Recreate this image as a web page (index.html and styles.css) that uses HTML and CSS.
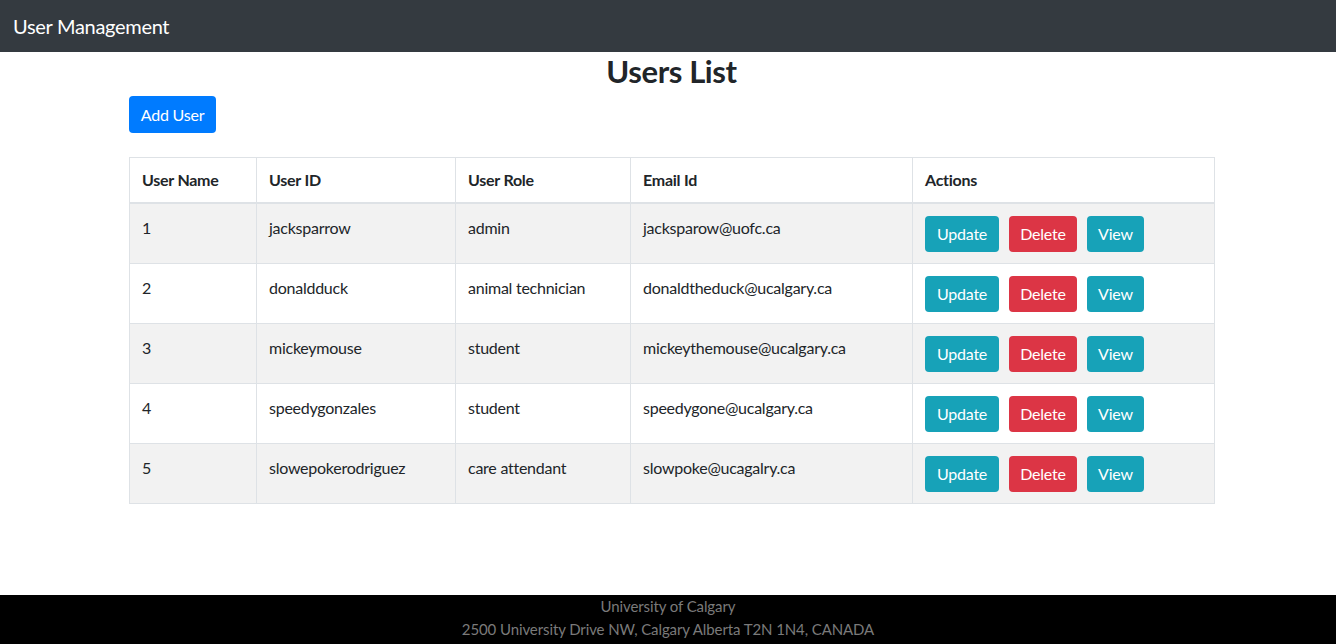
FILE: index.html
```html
<!DOCTYPE html>
<html lang="en">
<head>
<meta charset="utf-8">
<title>User Management</title>
<link rel="stylesheet" href="styles.css">
</head>
<body>
<nav class="navbar">
  <span class="brand">User Management</span>
</nav>
<main class="main">
  <h2 class="title">Users List</h2>
  <div class="toolbar">
    <button class="btn btn-primary">Add User</button>
  </div>
  <table class="users">
    <colgroup>
      <col class="c1"><col class="c2"><col class="c3"><col class="c4"><col class="c5">
    </colgroup>
    <thead>
      <tr><th>User Name</th><th>User ID</th><th>User Role</th><th>Email Id</th><th>Actions</th></tr>
    </thead>
    <tbody>
      <tr>
        <td>1</td><td>jacksparrow</td><td>admin</td><td>jacksparow@uofc.ca</td>
        <td><div class="actions"><button class="btn btn-info btn-update">Update</button><button class="btn btn-danger btn-delete">Delete</button><button class="btn btn-info btn-view">View</button></div></td>
      </tr>
      <tr>
        <td>2</td><td>donaldduck</td><td>animal technician</td><td>donaldtheduck@ucalgary.ca</td>
        <td><div class="actions"><button class="btn btn-info btn-update">Update</button><button class="btn btn-danger btn-delete">Delete</button><button class="btn btn-info btn-view">View</button></div></td>
      </tr>
      <tr>
        <td>3</td><td>mickeymouse</td><td>student</td><td>mickeythemouse@ucalgary.ca</td>
        <td><div class="actions"><button class="btn btn-info btn-update">Update</button><button class="btn btn-danger btn-delete">Delete</button><button class="btn btn-info btn-view">View</button></div></td>
      </tr>
      <tr>
        <td>4</td><td>speedygonzales</td><td>student</td><td>speedygone@ucalgary.ca</td>
        <td><div class="actions"><button class="btn btn-info btn-update">Update</button><button class="btn btn-danger btn-delete">Delete</button><button class="btn btn-info btn-view">View</button></div></td>
      </tr>
      <tr>
        <td>5</td><td>slowepokerodriguez</td><td>care attendant</td><td>slowpoke@ucagalry.ca</td>
        <td><div class="actions"><button class="btn btn-info btn-update">Update</button><button class="btn btn-danger btn-delete">Delete</button><button class="btn btn-info btn-view">View</button></div></td>
      </tr>
    </tbody>
  </table>
</main>
<footer class="footer">
  <div>University of Calgary</div>
  <div>2500 University Drive NW, Calgary Alberta T2N 1N4, CANADA</div>
</footer>
</body>
</html>
```

FILE: styles.css
```css
* { box-sizing: border-box; }
html, body { margin: 0; padding: 0; }
body {
  font-family: "Segoe UI", Lato, "Noto Sans", sans-serif;
  font-size: 16px;
  line-height: 1.5;
  letter-spacing: -0.25px;
  color: #212529;
  background: #fff;
  min-height: 100vh;
  display: flex;
  flex-direction: column;
}
.navbar {
  height: 52px;
  background: #343a40;
  display: flex;
  align-items: center;
  padding: 0 13px;
}
.brand {
  color: #fff;
  font-size: 20px;
  line-height: 30px;
  letter-spacing: -0.3px;
}
.main {
  padding: 0 122px 0 129px;
}
.title {
  margin: 0 0 6px;
  text-align: center;
  font-size: 31px;
  line-height: 38px;
  font-weight: 700;
  letter-spacing: -0.4px;
}
.toolbar {
  display: flex;
  margin-bottom: 24px;
}
.btn {
  font-family: inherit;
  font-size: 16px;
  letter-spacing: -0.2px;
  line-height: 24px;
  height: 36px;
  padding: 0;
  white-space: nowrap;
  border: none;
  border-radius: 4px;
  color: #fff;
  cursor: pointer;
  display: inline-flex;
  align-items: center;
  justify-content: center;
}
.btn-primary { background: #007bff; height: 37px; width: 87px; }
.btn-info { background: #17a2b8; }
.btn-danger { background: #dc3545; }
.btn-update { width: 74px; }
.btn-delete { width: 68px; }
.btn-view { width: 57px; }
.users {
  width: 1085px;
  border-collapse: collapse;
  table-layout: fixed;
}
.c1 { width: 127px; }
.c2 { width: 199px; }
.c3 { width: 175px; }
.c4 { width: 282px; }
.c5 { width: 302px; }
.users th, .users td {
  border: 1px solid #dee2e6;
  text-align: left;
  vertical-align: top;
}
.users th {
  padding: 10px 12px;
  font-weight: 700;
  border-bottom: 2px solid #dee2e6;
}
.users td {
  padding: 12px 12px 11px;
  height: 60px;
}
.users tbody tr:nth-child(odd) { background: #f2f2f2; }
.actions {
  display: flex;
  gap: 10px;
}
.footer {
  margin-top: auto;
  background: #000;
  color: #7a7a7a;
  text-align: center;
  font-size: 15px;
  letter-spacing: -0.1px;
  line-height: 23px;
  height: 49px;
}
```
